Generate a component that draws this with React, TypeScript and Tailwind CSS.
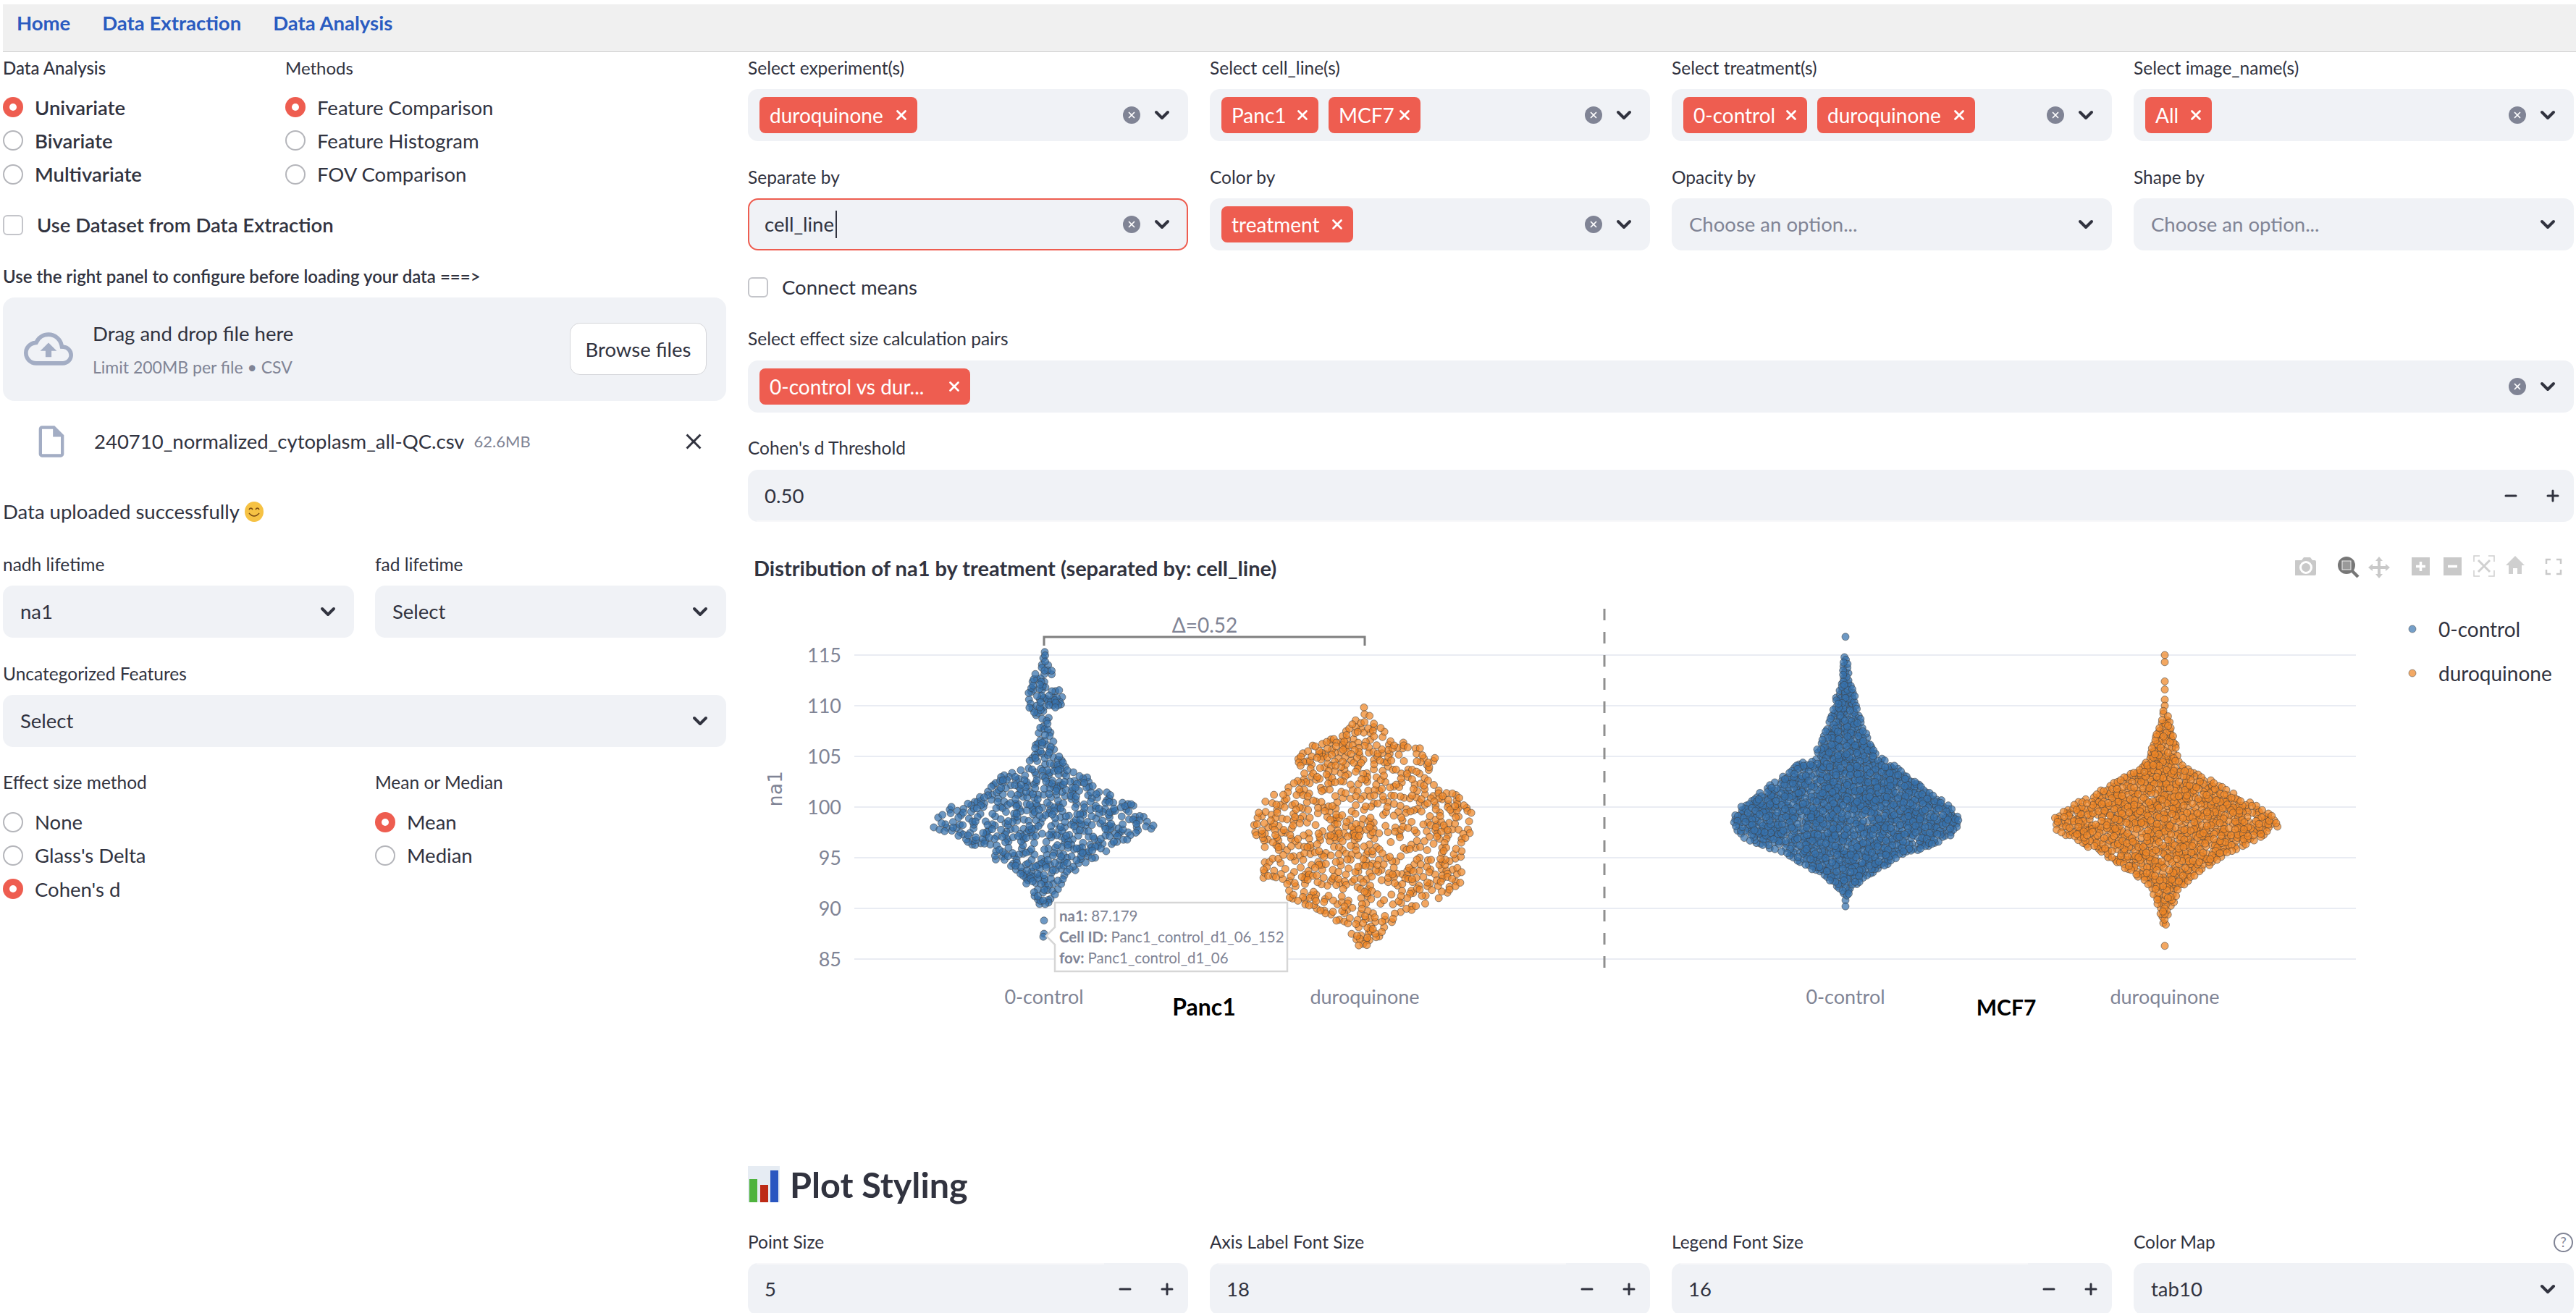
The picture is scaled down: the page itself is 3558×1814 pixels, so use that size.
import React from 'react';
import { ChevronDown, Minus, Plus, X } from 'lucide-react';
import { MdClose, MdOutlineCloudUpload, MdOutlineInsertDriveFile } from 'react-icons/md';

// swarm data: [value, half width in px], generated once with a fixed seed
type Env = [number, number][];
type Pt = { x: number; y: number };

const toY = (v: number) => 1115 + (100 - v) * 14;

function mulberry(seed: number) {
  return () => {
    seed |= 0;
    seed = (seed + 0x6d2b79f5) | 0;
    let t = Math.imul(seed ^ (seed >>> 15), 1 | seed);
    t = (t + Math.imul(t ^ (t >>> 7), 61 | t)) ^ t;
    return ((t ^ (t >>> 14)) >>> 0) / 4294967296;
  };
}

function halfAt(env: Env, v: number) {
  for (let i = 0; i < env.length - 1; i++) {
    const [a, ha] = env[i];
    const [b, hb] = env[i + 1];
    if (v <= a && v >= b) return ha + ((a - v) / (a - b)) * (hb - ha);
  }
  return 0;
}

function swarm(cx: number, env: Env, n: number, minDist: number, seed: number, extras: number[][] = []) {
  const rnd = mulberry(seed);
  const pts: Pt[] = extras.map(([dx, v]) => ({ x: cx + dx, y: toY(v) }));
  const top = env[0][0];
  const bottom = env[env.length - 1][0];
  const maxH = Math.max(...env.map(e => e[1]));
  let tries = 0;
  while (pts.length < n + extras.length && tries < n * 400) {
    tries++;
    const v = bottom + rnd() * (top - bottom);
    const h = halfAt(env, v);
    if (rnd() > Math.pow(h / maxH, 0.8)) continue;
    const x = cx + (rnd() * 2 - 1) * h;
    const y = toY(v);
    let ok = true;
    for (const p of pts) {
      if ((p.x - x) ** 2 + (p.y - y) ** 2 < minDist * minDist) {
        ok = false;
        break;
      }
    }
    if (ok) pts.push({ x, y });
  }
  return pts;
}

const panc1Control = swarm(1442, [[115.3, 1], [114.5, 3], [113, 14], [112, 18], [111, 26], [110, 24], [109, 12], [108, 8], [107, 12], [106, 14], [105, 22], [104, 30], [103, 60], [102, 80], [101, 98], [100, 130], [99, 148], [98, 155], [97.5, 145], [97, 130], [96, 100], [95, 72], [94, 48], [93, 30], [92, 20], [91, 14], [90.3, 5]], 650, 3.5, 11, [[1, 115.3], [-1, 114.7], [0, 88.8], [0, 87.5], [-1, 87.2]]);
const panc1Duro = swarm(1885, [[110, 1], [109.4, 3], [108.5, 14], [107, 35], [106, 75], [105.3, 95], [104.5, 102], [103, 85], [102, 105], [101, 133], [100, 147], [98, 154], [97, 150], [96, 142], [95, 140], [94, 145], [93, 143], [92, 130], [91, 105], [90, 70], [89, 42], [88, 30], [87, 18], [86, 4]], 820, 3.8, 23);
const mcf7Control = swarm(2549, [[115, 3], [113, 5], [112, 8], [111, 13], [110, 15], [108, 24], [106, 37], [105, 45], [104, 70], [103, 87], [102, 108], [101, 128], [100, 145], [99, 156], [98, 156], [97, 143], [96, 110], [95, 74], [94, 50], [93, 26], [92, 9], [91.2, 3]], 1450, 3.6, 37, [[0, 116.8], [0, 90.8], [0, 90.2]]);
const mcf7Duro = swarm(2990, [[109.5, 3], [108, 8], [107, 12], [106, 18], [105, 20], [104, 30], [103, 55], [102, 80], [101, 105], [100, 134], [99, 152], [98, 156], [97, 132], [96, 105], [95, 78], [94, 56], [93, 37], [92, 22], [91, 15], [90, 9], [89, 4], [88.2, 1]], 1050, 3.8, 51, [[0, 115], [0, 114.3], [0, 112.4], [0, 111.6], [0, 110.6], [0, 110], [0, 86.3]]);

const ticks = [115, 110, 105, 100, 95, 90, 85];

const Label = ({ children, className = '' }: { children: React.ReactNode; className?: string }) => (
  <div className={`h-[30px] flex items-center text-[24.500px] text-[#31333f] whitespace-nowrap ${className}`}>{children}</div>
);

const Radio = ({ label, on = false, bold = false }: { label: string; on?: boolean; bold?: boolean }) => (
  <div className="h-[46.3px] flex items-center gap-[16px]">
    {on ? (
      <span className="w-[28px] h-[28px] rounded-full bg-[#ee5d50] flex items-center justify-center shrink-0">
        <span className="w-[10px] h-[10px] rounded-full bg-white" />
      </span>
    ) : (
      <span className="w-[28px] h-[28px] rounded-full border-2 border-[#b5b6bb] bg-white shrink-0" />
    )}
    <span className={`text-[27.500px] text-[#31333f] whitespace-nowrap ${bold ? 'font-semibold' : ''}`}>{label}</span>
  </div>
);

const Checkbox = ({ label, bold = false, gap }: { label: string; bold?: boolean; gap: string }) => (
  <div className={`h-[30px] flex items-center ${gap}`}>
    <span className="w-[28px] h-[28px] rounded-[6px] border-2 border-[#c4c5ca] bg-white shrink-0" />
    <span className={`text-[27.500px] text-[#31333f] whitespace-nowrap ${bold ? 'font-semibold' : ''}`}>{label}</span>
  </div>
);

const Tag = ({ label, width }: { label: string; width: string }) => (
  <span className={`h-[50px] rounded-[8px] bg-[#ee5d50] text-white text-[28px] flex items-center justify-between pl-[14px] pr-[11px] whitespace-nowrap ${width}`}>
    {label}
    <X size={22} strokeWidth={3} />
  </span>
);

const ClearChevron = ({ clear = true }: { clear?: boolean }) => (
  <div className="flex items-center gap-[14px] shrink-0">
    {clear && (
      <span className="w-[24px] h-[24px] rounded-full bg-[#808495] flex items-center justify-center text-white">
        <X size={14} strokeWidth={3} />
      </span>
    )}
    <ChevronDown size={32} strokeWidth={3} className="text-[#31333f]" />
  </div>
);

const Field = ({ label, children, className = '', help = false }: { label: string; children: React.ReactNode; className?: string; help?: boolean }) => (
  <div className={className}>
    <div className="flex items-center justify-between">
      <Label>{label}</Label>
      {help && (
        <span className="w-[27px] h-[27px] rounded-full border-[2.5px] border-[#808495] text-[#808495] text-[19px] flex items-center justify-center mr-[1px]">?</span>
      )}
    </div>
    {children}
  </div>
);

const MultiBox = ({ children, focus = false, clear = true, mt = 'mt-[14px]' }: { children?: React.ReactNode; focus?: boolean; clear?: boolean; mt?: string }) => (
  <div className={`h-[72px] rounded-[14px] bg-[#f0f2f6] flex items-center justify-between ${mt} ${focus ? 'border-2 border-[#ee5d50] pl-[21px] pr-[18px]' : 'pl-[16px] pr-[20px]'}`}>
    <div className="flex items-center gap-[14px] text-[27.500px] text-[#31333f]">{children}</div>
    <ClearChevron clear={clear} />
  </div>
);

const SelectBox = ({ value, muted = false, mt = 'mt-[14px]' }: { value: string; muted?: boolean; mt?: string }) => (
  <div className={`h-[72px] rounded-[14px] bg-[#f0f2f6] flex items-center justify-between pl-[24px] pr-[20px] text-[27.500px] ${muted ? 'text-[#808495]' : 'text-[#31333f]'} ${mt}`}>
    {value}
    <ChevronDown size={32} strokeWidth={3} className="text-[#31333f]" />
  </div>
);

// the text part of a number input leaves a faint line along one edge
const NumberBox = ({ value, mt = 'mt-[14px]', line = 'top-0' }: { value: string; mt?: string; line?: string }) => (
  <div className={`relative h-[72px] rounded-[14px] bg-[#f0f2f6] flex items-center justify-between pl-[23px] pr-[17px] text-[27.500px] text-[#31333f] ${mt}`}>
    <span className={`absolute left-[12px] right-[116px] h-[2px] bg-[#f8f8fa] ${line}`} />
    {value}
    <div className="flex items-center gap-[34px]">
      <Minus size={24} strokeWidth={3} />
      <Plus size={24} strokeWidth={3} />
    </div>
  </div>
);

const Smile = () => (
  <svg viewBox="0 0 26 30" className="w-[26px] h-[30px] ml-[7px]">
    <ellipse cx="13" cy="15" rx="13" ry="14" fill="#f6c244" />
    <path d="M6 12q2.500-4 5 0M15 12q2.500-4 5 0" fill="none" stroke="#7a4a12" strokeWidth="1.6" />
    <path d="M6 17q7 8 14 0" fill="none" stroke="#7a4a12" strokeWidth="1.6" />
  </svg>
);

const BarsEmoji = () => (
  <svg viewBox="0 0 44 50" className="w-[44px] h-[50px] shrink-0">
    <rect width="44" height="50" fill="#e6ecf3" />
    <rect x="2" y="18" width="11" height="32" fill="#4fb33e" />
    <rect x="17" y="26" width="11" height="24" fill="#bd2b16" />
    <rect x="31" y="6" width="11" height="44" fill="#2a56c0" />
  </svg>
);

const Toolbar = () => (
  <svg viewBox="3170 765 370 40" className="w-[370px] h-[40px]">
    {/* camera */}
    <path d="M3171 774h8l3-4h9l3 4h3a2 2 0 0 1 2 2v17a2 2 0 0 1-2 2h-26a2 2 0 0 1-2-2v-17a2 2 0 0 1 2-2z" fill="#c9c9c9" />
    <circle cx="3185" cy="784" r="7.500" fill="none" stroke="#fff" strokeWidth="3" />
    {/* zoom */}
    <circle cx="3241" cy="781" r="12" fill="#777" />
    <rect x="3235" y="775" width="12" height="12" fill="#999" stroke="#eee" strokeWidth="1" />
    <path d="M3249 789l8 8" stroke="#777" strokeWidth="4.500" />
    {/* pan */}
    <path d="M3286 769l5 6h-3v7h7v-3l6 5-6 5v-3h-7v7h3l-5 6-5-6h3v-7h-7v3l-6-5 6-5v3h7v-7h-3z" fill="#c9c9c9" />
    {/* zoom in, zoom out */}
    <rect x="3331" y="770" width="25" height="25" fill="#c9c9c9" />
    <path d="M3343.500 776v13M3337 782.500h13" stroke="#fff" strokeWidth="3.500" />
    <rect x="3375" y="770" width="25" height="25" fill="#c9c9c9" />
    <path d="M3381 782.500h13" stroke="#fff" strokeWidth="3.500" />
    {/* autoscale */}
    <path d="M3417 776v-8h8M3437 768h8v8M3445 788v8h-8M3425 796h-8v-8" fill="none" stroke="#d0d0d0" strokeWidth="1.500" />
    <path d="M3423 774l16 16M3439 774l-16 16" stroke="#d0d0d0" strokeWidth="3" />
    {/* home */}
    <path d="M3474 768l13 13h-4v12h-6v-8h-6v8h-6v-12h-4z" fill="#cfcfcf" />
    {/* fullscreen */}
    <path d="M3517 779v-6h6M3531 773h6v6M3537 787v6h-6M3523 793h-6v-6" fill="none" stroke="#c9c9c9" strokeWidth="2.500" />
  </svg>
);

const Dots = ({ pts, fill }: { pts: Pt[]; fill: string }) => (
  <g>
    {pts.map((p, i) => (
      <circle key={i} cx={p.x} cy={p.y} r={5} fill={fill} fillOpacity={0.72} stroke="#3c3c3c" strokeOpacity={0.55} strokeWidth={1} />
    ))}
  </g>
);

const Chart = () => (
  <svg viewBox="1033 805 2522 796" className="block w-[2522px] h-[796px]">
    {ticks.map(t => (
      <g key={t}>
        <line x1={1180} x2={3254} y1={toY(t)} y2={toY(t)} stroke="#e9ecf3" strokeWidth={2} />
        <text x={1162} y={toY(t) + 10} textAnchor="end" className="fill-[#808495] text-[27px]">{t}</text>
      </g>
    ))}
    <line x1={2216} x2={2216} y1={841} y2={1342} stroke="#8f8f8f" strokeWidth={3} strokeDasharray="16 16" />
    <text x={1071} y={1090} textAnchor="middle" transform="rotate(-90 1071 1090)" dy={9} className="fill-[#808495] text-[27px] font-['DejaVu_Sans_Mono',monospace]">na1</text>

    <Dots pts={panc1Control} fill="#3470ac" />
    <Dots pts={panc1Duro} fill="#ee8524" />
    <Dots pts={mcf7Control} fill="#3470ac" />
    <Dots pts={mcf7Duro} fill="#ee8524" />

    <path d="M1442 892v-12h443v12" fill="none" stroke="#7f7f7f" strokeWidth={3} />
    <text x={1664} y={874} textAnchor="middle" className="fill-[#808495] text-[28px]">Δ=0.52</text>

    <text x={1442} y={1387} textAnchor="middle" className="fill-[#808495] text-[27px]">0-control</text>
    <text x={1885} y={1387} textAnchor="middle" className="fill-[#808495] text-[27px]">duroquinone</text>
    <text x={2549} y={1387} textAnchor="middle" className="fill-[#808495] text-[27px]">0-control</text>
    <text x={2990} y={1387} textAnchor="middle" className="fill-[#808495] text-[27px]">duroquinone</text>
    <text x={1663} y={1403} textAnchor="middle" className="fill-black text-[32px] font-bold">Panc1</text>
    <text x={2771} y={1403} textAnchor="middle" className="fill-black text-[30px] font-bold">MCF7</text>

    {/* hover tooltip */}
    <path d="M1457 1247h321v95h-321v-37l-12-12 12-12z" fill="#fff" stroke="#d6d6d6" strokeWidth={2.5} />
    <text x={1463} y={1273} className="fill-[#808495] text-[20.500px]"><tspan className="font-bold">na1: </tspan>87.179</text>
    <text x={1463} y={1302} className="fill-[#808495] text-[20.500px]"><tspan className="font-bold">Cell ID: </tspan>Panc1_control_d1_06_152</text>
    <text x={1463} y={1331} className="fill-[#808495] text-[20.500px]"><tspan className="font-bold">fov: </tspan>Panc1_control_d1_06</text>

    {/* legend */}
    <circle cx={3332} cy={869} r={5} fill="#3a76b0" fillOpacity={0.7} stroke="#444" strokeOpacity={0.5} />
    <circle cx={3332} cy={930} r={5} fill="#ee8524" fillOpacity={0.7} stroke="#444" strokeOpacity={0.5} />
    <text x={3368} y={880} className="fill-[#31333f] text-[28px]">0-control</text>
    <text x={3368} y={941} className="fill-[#31333f] text-[28px]">duroquinone</text>
  </svg>
);

const LeftPanel = () => (
  <div className="w-[999px] ml-[4px] shrink-0">
    <div className="flex">
      <div className="w-[390px]">
        <div className="h-[44px] flex items-center text-[24px] font-medium text-[#31333f]">Data Analysis</div>
        <div className="mt-[9px]">
          <Radio label="Univariate" on bold />
          <Radio label="Bivariate" bold />
          <Radio label="Multivariate" bold />
        </div>
      </div>
      <div>
        <div className="h-[44px] flex items-center text-[24px] text-[#31333f]">Methods</div>
        <div className="mt-[9px]">
          <Radio label="Feature Comparison" on />
          <Radio label="Feature Histogram" />
          <Radio label="FOV Comparison" />
        </div>
      </div>
    </div>

    <div className="mt-[32px]">
      <Checkbox label="Use Dataset from Data Extraction" bold gap="gap-[19px]" />
    </div>

    <div className="mt-[41px] h-[30px] flex items-center text-[24px] font-semibold text-[#31333f] whitespace-nowrap">
      Use the right panel to configure before loading your data ===&gt;
    </div>

    <div className="mt-[14px] h-[143px] rounded-[16px] bg-[#f0f2f6] flex items-center justify-between pl-[29px] pr-[27px]">
      <div className="flex items-center gap-[27px]">
        <MdOutlineCloudUpload size={68} className="text-[#a3adc4]" />
        <div>
          <div className="text-[27.500px] leading-[36px] text-[#31333f]">Drag and drop file here</div>
          <div className="text-[23px] leading-[30px] mt-[13px] text-[#808495]">Limit 200MB per file • CSV</div>
        </div>
      </div>
      <div className="w-[189px] h-[72px] rounded-[14px] bg-white border border-[#d5d6da] flex items-center justify-center text-[27.500px] text-[#31333f]">
        Browse files
      </div>
    </div>

    <div className="mt-[28px] h-[56px] flex items-center pl-[41px] pr-[27px]">
      <MdOutlineInsertDriveFile size={52} className="text-[#a3adc4] shrink-0" />
      <span className="ml-[33px] text-[27.500px] text-[#31333f] whitespace-nowrap">240710_normalized_cytoplasm_all-QC.csv</span>
      <span className="ml-[13px] text-[22px] text-[#808495] whitespace-nowrap">62.6MB</span>
      <MdClose size={36} className="ml-auto text-[#31333f]" />
    </div>

    <div className="mt-[49px] h-[40px] flex items-center text-[27.500px] text-[#31333f]">
      Data uploaded successfully
      <Smile />
    </div>

    <div className="mt-[38px] grid grid-cols-2 gap-[29px]">
      <Field label="nadh lifetime"><SelectBox value="na1" /></Field>
      <Field label="fad lifetime"><SelectBox value="Select" /></Field>
    </div>

    <Field label="Uncategorized Features" className="mt-[35px]"><SelectBox value="Select" /></Field>

    <div className="mt-[34.5px] grid grid-cols-2 gap-[29px]">
      <div>
        <Label>Effect size method</Label>
        <div className="mt-[16px]">
          <Radio label="None" />
          <Radio label="Glass's Delta" />
          <Radio label="Cohen's d" on />
        </div>
      </div>
      <div>
        <Label>Mean or Median</Label>
        <div className="mt-[16px]">
          <Radio label="Mean" on />
          <Radio label="Median" />
        </div>
      </div>
    </div>
  </div>
);

const RightPanel = () => (
  <div className="w-[2522px] ml-[30px] shrink-0">
    <div className="grid grid-cols-4 gap-x-[30px]">
      <div>
        <div className="h-[44px] flex items-center text-[24.500px] text-[#31333f]">Select experiment(s)</div>
        <MultiBox mt="mt-[6.5px]"><Tag label="duroquinone" width="w-[218px]" /></MultiBox>
      </div>
      <div>
        <div className="h-[44px] flex items-center text-[24.500px] text-[#31333f]">Select cell_line(s)</div>
        <MultiBox mt="mt-[6.5px]"><Tag label="Panc1" width="w-[134px]" /><Tag label="MCF7" width="w-[127px]" /></MultiBox>
      </div>
      <div>
        <div className="h-[44px] flex items-center text-[24.500px] text-[#31333f]">Select treatment(s)</div>
        <MultiBox mt="mt-[6.5px]"><Tag label="0-control" width="w-[171px]" /><Tag label="duroquinone" width="w-[218px]" /></MultiBox>
      </div>
      <div>
        <div className="h-[44px] flex items-center text-[24.500px] text-[#31333f]">Select image_name(s)</div>
        <MultiBox mt="mt-[6.5px]"><Tag label="All" width="w-[92px]" /></MultiBox>
      </div>
    </div>

    <div className="mt-[35.5px] grid grid-cols-4 gap-x-[30px]">
      <Field label="Separate by">
        <MultiBox focus>
          <span className="flex items-center">cell_line<span className="w-[2px] h-[38px] bg-[#31333f] ml-[2px]" /></span>
        </MultiBox>
      </Field>
      <Field label="Color by"><MultiBox><Tag label="treatment" width="w-[182px]" /></MultiBox></Field>
      <Field label="Opacity by"><SelectBox value="Choose an option..." muted /></Field>
      <Field label="Shape by"><SelectBox value="Choose an option..." muted /></Field>
    </div>

    <div className="mt-[36px]">
      <Checkbox label="Connect means" gap="gap-[19px]" />
    </div>

    <Field label="Select effect size calculation pairs" className="mt-[41px]">
      <MultiBox mt="mt-[14.5px]"><Tag label="0-control vs dur..." width="w-[291px]" /></MultiBox>
    </Field>

    <Field label="Cohen's d Threshold" className="mt-[34.5px]">
      <NumberBox value="0.50" mt="mt-[15px]" line="bottom-0" />
    </Field>

    <div className="mt-[44px] h-[40px] flex items-center justify-between pl-[8px] pr-[15px]">
      <span className="text-[29px] font-bold text-[#31333f] whitespace-nowrap">Distribution of na1 by treatment (separated by: cell_line)</span>
      <Toolbar />
    </div>

    <Chart />

    <div className="mt-[5px] h-[60px] flex items-center gap-[14px]">
      <BarsEmoji />
      <span className="text-[48.500px] font-bold text-[#31333f]">Plot Styling</span>
    </div>

    <div className="mt-[35px] grid grid-cols-4 gap-x-[30px]">
      <Field label="Point Size"><NumberBox value="5" /></Field>
      <Field label="Axis Label Font Size"><NumberBox value="18" /></Field>
      <Field label="Legend Font Size"><NumberBox value="16" /></Field>
      <Field label="Color Map" help><SelectBox value="tab10" /></Field>
    </div>
  </div>
);

export default function App() {
  return (
    <div className="w-[3558px] h-[1814px] overflow-hidden bg-white pt-[6px] font-['Lato','Noto_Sans',sans-serif]">
      <nav className="ml-[4px] h-[66px] bg-[#f0f0f0] border-b border-[#cfcfcf] flex items-center gap-[44px] pl-[19px] pb-[14px] text-[27.500px] font-bold text-[#2a5bc0]">
        <span>Home</span>
        <span>Data Extraction</span>
        <span>Data Analysis</span>
      </nav>
      <div className="flex">
        <LeftPanel />
        <RightPanel />
      </div>
    </div>
  );
}
